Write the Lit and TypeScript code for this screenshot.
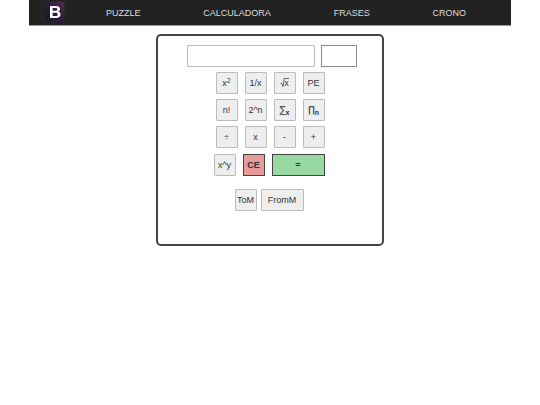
import { LitElement, html, css, svg } from "lit";
import { customElement } from "lit/decorators.js";

const font = css`
  * {
    box-sizing: border-box;
    font-family: "Liberation Sans", Arial, sans-serif;
  }
`;

@customElement("nav-bar")
class NavBar extends LitElement {
  static styles = [
    font,
    css`
      :host {
        display: block;
      }
      .bar {
        display: flex;
        align-items: center;
        justify-content: space-between;
        height: 26px;
        padding: 0 45px 0 16px;
        background: #222;
        border-bottom: 1px solid #999;
      }
      .links {
        flex: 1;
        display: flex;
        justify-content: space-between;
        margin-left: 41px;
        padding-top: 1px;
      }
      a {
        color: #ddd;
        font-size: 9px;
        line-height: 12px;
        text-decoration: none;
      }
      .logo {
        display: block;
        height: 24px;
      }
      .logo svg {
        display: block;
      }
    `,
  ];

  render() {
    return html`
      <nav class="bar">
        <a class="logo" href="#" aria-label="Home">
          <svg width="20" height="21" viewBox="0 0 20 21">
            <defs>
              <linearGradient id="g" x1="0" y1="1" x2="1" y2="0">
                <stop offset="0" stop-color="#1b1428" />
                <stop offset="0.5" stop-color="#2e1a3f" />
                <stop offset="1" stop-color="#56304f" />
              </linearGradient>
            </defs>
            <rect width="19" height="20" x="0.5" y="0.5" rx="4" fill="url(#g)" />
            <path
              fill="#fff"
              fill-rule="evenodd"
              d="M5 5H11C13.6 5 15 6.200 15 8C15 9.300 14.300 10.200 13.200 10.600C14.700 11 15.500 12.100 15.500 13.500C15.500 15.700 13.900 17 11.200 17H5ZM7.600 7V9.800H10.500C11.700 9.800 12.300 9.300 12.300 8.400C12.300 7.500 11.700 7 10.500 7ZM7.600 11.800V15H10.800C12.100 15 12.700 14.400 12.700 13.400C12.700 12.400 12.100 11.800 10.800 11.800Z"
            />
          </svg>
        </a>
        <div class="links">
          <a href="#puzzle">PUZZLE</a>
          <a href="#calculadora">CALCULADORA</a>
          <a href="#frases">FRASES</a>
          <a href="#crono">CRONO</a>
        </div>
      </nav>
    `;
  }
}

const root = svg`<path d="M0.500 6.500L1.500 6L3 9.500L4.300 1.500H9" fill="none" stroke="#444" stroke-width="0.800" />`;

@customElement("calc-pad")
class CalcPad extends LitElement {
  static styles = [
    font,
    css`
      :host {
        display: block;
      }
      .card {
        display: flex;
        flex-direction: column;
        align-items: center;
        padding: 9px 0 33px;
        border: 2px solid #444;
        border-radius: 5px;
      }
      .display {
        display: grid;
        grid-template-columns: 128px 36px;
        gap: 6px;
        margin-left: 4px;
      }
      input {
        width: 100%;
        height: 22px;
        padding: 0 4px;
        border: 1px solid #bbb;
        border-radius: 1px;
        background: #fff;
        font-size: 9px;
      }
      .memory {
        border-color: #888;
        border-radius: 0;
      }
      .keys {
        display: grid;
        grid-template-columns: repeat(4, 22px);
        gap: 5px 7px;
        margin-top: 5px;
      }
      .bottom {
        display: grid;
        grid-template-columns: 22px 22px 53px;
        gap: 7px;
        margin: 6px 2px 0 0;
      }
      .store {
        display: grid;
        grid-template-columns: 22px 43px;
        gap: 4px;
        margin: 13px 2px 0 0;
      }
      button {
        display: flex;
        align-items: center;
        justify-content: center;
        height: 22px;
        padding: 0;
        border: 1px solid #bbb;
        border-radius: 1px;
        background: #eee;
        color: #333;
        font-size: 9px;
        line-height: 12px;
        white-space: nowrap;
      }
      sup {
        align-self: flex-start;
        margin-top: 4px;
        font-size: 7px;
        line-height: 8px;
      }
      .op {
        font-family: "DejaVu Sans", sans-serif;
        font-size: 9px;
      }
      .index {
        align-self: flex-end;
        margin-bottom: 3px;
        font-size: 7px;
        line-height: 8px;
        font-weight: bold;
      }
      .root {
        display: grid;
      }
      .root > * {
        grid-area: 1 / 1;
      }
      .radicand {
        padding-left: 4px;
      }
      .clear,
      .equals {
        border-color: #444;
        border-radius: 0;
        font-weight: bold;
      }
      .clear {
        background: #e89a9a;
      }
      .equals {
        background: #98d9a2;
      }
    `,
  ];

  render() {
    return html`
      <section class="card">
        <div class="display">
          <input type="text" aria-label="Display" />
          <input class="memory" type="text" aria-label="Memory" />
        </div>
        <div class="keys">
          <button>x<sup>2</sup></button>
          <button>1/x</button>
          <button aria-label="Square root">
            <span class="root">
              <svg width="9" height="12" viewBox="0 0 9 12">${root}</svg>
              <span class="radicand">x</span>
            </span>
          </button>
          <button>PE</button>
          <button>n!</button>
          <button>2^n</button>
          <button><span class="op">∑</span><span class="index">x</span></button>
          <button><span class="op">∏</span><span class="index">n</span></button>
          <button>÷</button>
          <button>x</button>
          <button>-</button>
          <button>+</button>
        </div>
        <div class="bottom">
          <button>x^y</button>
          <button class="clear">CE</button>
          <button class="equals">=</button>
        </div>
        <div class="store">
          <button>ToM</button>
          <button>FromM</button>
        </div>
      </section>
    `;
  }
}

@customElement("app-root")
class AppRoot extends LitElement {
  static styles = css`
    :host {
      display: block;
      padding: 0 29px;
    }
    .calculator {
      width: 228px;
      max-width: 100%;
      margin: 8px auto 0;
    }
  `;

  render() {
    return html`
      <nav-bar></nav-bar>
      <calc-pad class="calculator"></calc-pad>
    `;
  }
}
